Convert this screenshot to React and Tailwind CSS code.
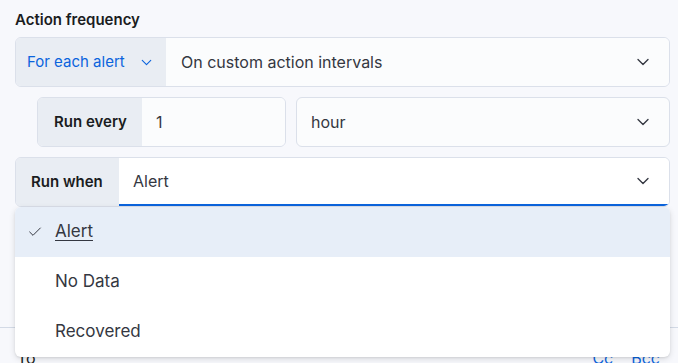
import { Check, ChevronDown } from "lucide-react";

const Chevron = ({ className = "" }) => (
  <ChevronDown className={className} strokeWidth={1.6} />
);

// Row with a grey label on the left and a field on the right
const Field = ({ label, labelClass, children, className = "" }) => (
  <div
    className={`flex h-[50px] rounded-[6px] border border-[#dbe0ea] overflow-hidden ${className}`}
  >
    <div
      className={`flex items-center shrink-0 bg-[#e9edf3] text-[15px] ${labelClass}`}
    >
      {label}
    </div>
    {children}
  </div>
);

const options = ["Alert", "No Data", "Recovered"];

export default function App() {
  return (
    <div
      className="relative w-[678px] h-[363px] overflow-hidden bg-[#f7f8fc] text-[#343741]"
      style={{ fontFamily: "Inter, 'Noto Sans', sans-serif" }}
    >
      <div className="pl-[15px] pr-[8px] pt-[10px]">
        <div className="text-[15px] font-semibold leading-[20px] text-[#1a1c21] mb-[7px]">
          Action frequency
        </div>

        {/* Summary / interval */}
        <Field
          label={
            <>
              <span>For each alert</span>
              <Chevron className="w-[17px] h-[17px] ml-[13px] text-[#0b64dd]" />
            </>
          }
          labelClass="w-[150px] pl-[11px] text-[#0b64dd]"
        >
          <div className="flex flex-1 items-center justify-between bg-[#fbfcfd] pl-[15px] pr-[16px] text-[16px]">
            <span>On custom action intervals</span>
            <Chevron className="w-[20px] h-[20px] text-[#343741]" />
          </div>
        </Field>

        {/* Run every */}
        <div className="flex gap-[10px] mt-[10px] ml-[22px]">
          <Field
            label="Run every"
            labelClass="w-[104px] pl-[16px] font-semibold text-[#1a1c21]"
            className="w-[249px]"
          >
            <div className="flex flex-1 items-center bg-[#fbfcfd] pl-[14px] text-[16px]">
              1
            </div>
          </Field>
          <div className="flex flex-1 h-[50px] items-center justify-between rounded-[6px] border border-[#dbe0ea] bg-[#fbfcfd] pl-[14px] pr-[16px] text-[16px]">
            <span>hour</span>
            <Chevron className="w-[20px] h-[20px] text-[#343741]" />
          </div>
        </div>

        {/* Run when */}
        <Field
          label="Run when"
          labelClass="w-[103px] pl-[15px] font-semibold text-[#1a1c21]"
          className="mt-[10px]"
        >
          <div className="flex flex-1 items-center justify-between bg-white border-b-2 border-[#0b64dd] pl-[14px] pr-[16px] text-[16px]">
            <span>Alert</span>
            <Chevron className="w-[20px] h-[20px] text-[#343741]" />
          </div>
        </Field>

        <div className="h-[120px]" />
      </div>

      {/* Next section, partly covered by the menu */}
      <div className="border-t border-[#d3dae6] flex items-start justify-between pl-[17px] pr-[18px] pt-[18px] text-[16px]">
        <span className="text-[#1a1c21]">To</span>
        <div className="flex gap-[18px] text-[#0b64dd] text-[16px]">
          <span>Cc</span>
          <span>Bcc</span>
        </div>
      </div>

      {/* Dropdown menu */}
      <div className="absolute left-[15px] top-[207px] w-[655px] rounded-[6px] bg-white overflow-hidden shadow-[0_2px_6px_rgba(0,0,0,0.12),0_1px_2px_rgba(0,0,0,0.08)]">
        {options.map((opt, i) => (
          <div
            key={opt}
            className={`flex items-center h-[50px] text-[17px] ${
              i === 0 ? "bg-[#e7eef8]" : ""
            }`}
          >
            <div className="w-[40px] pl-[12px] flex items-center">
              {i === 0 && <Check className="w-[16px] h-[16px]" strokeWidth={1.5} />}
            </div>
            <span className={i === 0 ? "underline underline-offset-[3px]" : ""}>
              {opt}
            </span>
          </div>
        ))}
      </div>
    </div>
  );
}
